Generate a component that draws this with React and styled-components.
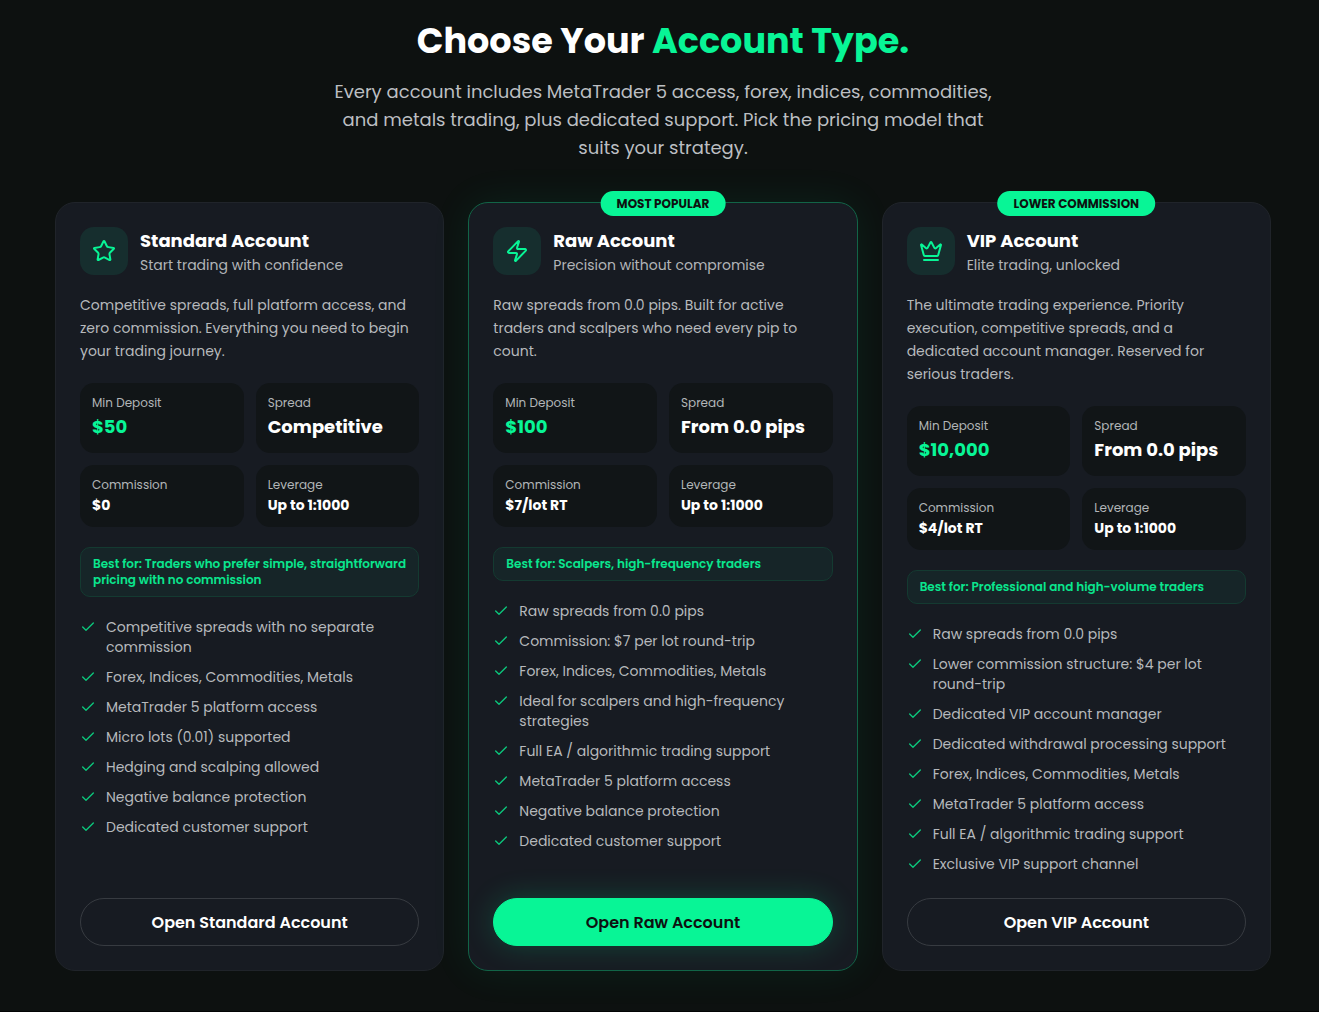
import React from "react";
import styled, { createGlobalStyle } from "styled-components";
import { Star, Zap, Crown, Check } from "lucide-react";

const GREEN = "#08f596";

const GlobalStyle = createGlobalStyle`
  *, *::before, *::after { box-sizing: border-box; }
  body {
    margin: 0;
    background: #0d1110;
    color: #ffffff;
    font-family: Poppins, Inter, "Liberation Sans", sans-serif;
  }
  h2, h3, p, ul, dl, dd { margin: 0; padding: 0; }
`;

const Section = styled.section`
  padding: 21px 48px 40px 55px;
  border-bottom: 2px solid #030404;
`;

const Container = styled.div`
  max-width: 1216px;
  margin: 0 auto;
`;

const Header = styled.header`
  max-width: 672px;
  margin: 0 auto 40px;
  text-align: center;
`;

const Heading = styled.h2`
  margin-bottom: 17px;
  font-size: 35px;
  line-height: 40px;
  font-weight: 700;
`;

const Accent = styled.span`
  color: ${GREEN};
`;

const Lead = styled.p`
  font-size: 18px;
  line-height: 28px;
  color: #bcbfc2;
`;

const Grid = styled.div`
  display: grid;
  grid-template-columns: repeat(3, minmax(0, 1fr));
  gap: 24px;
`;

const Card = styled.article`
  position: relative;
  display: flex;
  flex-direction: column;
  padding: 24px;
  border: 1px solid ${(p) => (p.$featured ? "#126447" : "#20242a")};
  border-radius: 20px;
  background: #171b22;
  box-shadow: ${(p) => (p.$featured ? "0 0 40px rgba(8, 245, 150, 0.08)" : "none")};
`;

const Badge = styled.span`
  position: absolute;
  top: -12px;
  left: 50%;
  transform: translateX(-50%);
  padding: 4px 16px;
  border-radius: 999px;
  background: ${GREEN};
  color: #0d1110;
  font-size: 12px;
  line-height: 17px;
  font-weight: 700;
  white-space: nowrap;
`;

const CardHeader = styled.div`
  display: flex;
  align-items: center;
  gap: 12px;
  margin-bottom: 19px;
`;

const IconTile = styled.div`
  display: grid;
  place-items: center;
  flex: none;
  width: 48px;
  height: 48px;
  border-radius: 14px;
  background: #162e2e;
  color: ${GREEN};
`;

const Title = styled.h3`
  font-size: 18px;
  line-height: 28px;
  font-weight: 700;
`;

const Tagline = styled.p`
  font-size: 14px;
  line-height: 20px;
  color: #b2b5b8;
`;

const Description = styled.p`
  margin-bottom: 20px;
  font-size: 14px;
  line-height: 23px;
  color: #b6b9bc;
`;

const Stats = styled.dl`
  display: grid;
  grid-template-columns: repeat(2, minmax(0, 1fr));
  gap: 12px;
  margin-bottom: 20px;
`;

const Stat = styled.div`
  padding: 12px;
  border-radius: 14px;
  background: #111517;
`;

const StatLabel = styled.dt`
  margin-bottom: 2px;
  font-size: 12px;
  line-height: 16px;
  color: #b2b5b8;
`;

const StatValue = styled.dd`
  font-size: ${(p) => (p.$large ? "18px" : "14px")};
  line-height: ${(p) => (p.$large ? "28px" : "20px")};
  font-weight: 700;
  color: ${(p) => (p.$accent ? GREEN : "#ffffff")};
`;

const BestFor = styled.p`
  margin-bottom: 20px;
  padding: 8px 12px;
  border: 1px solid #143a31;
  border-radius: 10px;
  background: #162528;
  font-size: 12px;
  line-height: 16px;
  font-weight: 600;
  color: #0ae68e;
`;

const Features = styled.ul`
  display: flex;
  flex: 1;
  flex-direction: column;
  gap: 10px;
  margin-bottom: 24px;
  list-style: none;
`;

const Feature = styled.li`
  display: flex;
  align-items: flex-start;
  gap: 10px;
  font-size: 14px;
  line-height: 20px;
  color: #b6b9bc;

  svg {
    flex: none;
    margin-top: 2px;
    color: #0bc87d;
  }
`;

const Cta = styled.button`
  height: 48px;
  border: 1px solid ${(p) => (p.$primary ? GREEN : "#373b41")};
  border-radius: 999px;
  background: ${(p) => (p.$primary ? GREEN : "transparent")};
  box-shadow: ${(p) => (p.$primary ? "0 0 30px rgba(8, 245, 150, 0.2)" : "none")};
  color: ${(p) => (p.$primary ? "#0d1110" : "#ffffff")};
  font-family: inherit;
  font-size: 16px;
  font-weight: 600;
  cursor: pointer;
`;

const accounts = [
  {
    name: "Standard Account",
    tagline: "Start trading with confidence",
    icon: Star,
    description:
      "Competitive spreads, full platform access, and zero commission. Everything you need to begin your trading journey.",
    deposit: "$50",
    spread: "Competitive",
    commission: "$0",
    bestFor: "Traders who prefer simple, straightforward pricing with no commission",
    features: [
      "Competitive spreads with no separate commission",
      "Forex, Indices, Commodities, Metals",
      "MetaTrader 5 platform access",
      "Micro lots (0.01) supported",
      "Hedging and scalping allowed",
      "Negative balance protection",
      "Dedicated customer support",
    ],
    cta: "Open Standard Account",
  },
  {
    name: "Raw Account",
    tagline: "Precision without compromise",
    icon: Zap,
    badge: "MOST POPULAR",
    featured: true,
    description:
      "Raw spreads from 0.0 pips. Built for active traders and scalpers who need every pip to count.",
    deposit: "$100",
    spread: "From 0.0 pips",
    commission: "$7/lot RT",
    bestFor: "Scalpers, high-frequency traders",
    features: [
      "Raw spreads from 0.0 pips",
      "Commission: $7 per lot round-trip",
      "Forex, Indices, Commodities, Metals",
      "Ideal for scalpers and high-frequency strategies",
      "Full EA / algorithmic trading support",
      "MetaTrader 5 platform access",
      "Negative balance protection",
      "Dedicated customer support",
    ],
    cta: "Open Raw Account",
  },
  {
    name: "VIP Account",
    tagline: "Elite trading, unlocked",
    icon: Crown,
    badge: "LOWER COMMISSION",
    description:
      "The ultimate trading experience. Priority execution, competitive spreads, and a dedicated account manager. Reserved for serious traders.",
    deposit: "$10,000",
    spread: "From 0.0 pips",
    commission: "$4/lot RT",
    bestFor: "Professional and high-volume traders",
    features: [
      "Raw spreads from 0.0 pips",
      "Lower commission structure: $4 per lot round-trip",
      "Dedicated VIP account manager",
      "Dedicated withdrawal processing support",
      "Forex, Indices, Commodities, Metals",
      "MetaTrader 5 platform access",
      "Full EA / algorithmic trading support",
      "Exclusive VIP support channel",
    ],
    cta: "Open VIP Account",
  },
];

function AccountCard({ account }) {
  const Icon = account.icon;
  return (
    <Card $featured={account.featured}>
      {account.badge && <Badge>{account.badge}</Badge>}
      <CardHeader>
        <IconTile>
          <Icon size={24} strokeWidth={2} aria-hidden="true" />
        </IconTile>
        <div>
          <Title>{account.name}</Title>
          <Tagline>{account.tagline}</Tagline>
        </div>
      </CardHeader>
      <Description>{account.description}</Description>
      <Stats>
        <Stat>
          <StatLabel>Min Deposit</StatLabel>
          <StatValue $large $accent>{account.deposit}</StatValue>
        </Stat>
        <Stat>
          <StatLabel>Spread</StatLabel>
          <StatValue $large>{account.spread}</StatValue>
        </Stat>
        <Stat>
          <StatLabel>Commission</StatLabel>
          <StatValue>{account.commission}</StatValue>
        </Stat>
        <Stat>
          <StatLabel>Leverage</StatLabel>
          <StatValue>Up to 1:1000</StatValue>
        </Stat>
      </Stats>
      <BestFor>{`Best for: ${account.bestFor}`}</BestFor>
      <Features>
        {account.features.map((feature) => (
          <Feature key={feature}>
            <Check size={16} strokeWidth={2} aria-hidden="true" />
            <span>{feature}</span>
          </Feature>
        ))}
      </Features>
      <Cta type="button" $primary={account.featured}>{account.cta}</Cta>
    </Card>
  );
}

export default function App() {
  return (
    <>
      <GlobalStyle />
      <Section>
        <Container>
          <Header>
            <Heading>
              Choose Your <Accent>Account Type.</Accent>
            </Heading>
            <Lead>
              Every account includes MetaTrader 5 access, forex, indices, commodities, and metals
              trading, plus dedicated support. Pick the pricing model that suits your strategy.
            </Lead>
          </Header>
          <Grid>
            {accounts.map((account) => (
              <AccountCard key={account.name} account={account} />
            ))}
          </Grid>
        </Container>
      </Section>
    </>
  );
}
